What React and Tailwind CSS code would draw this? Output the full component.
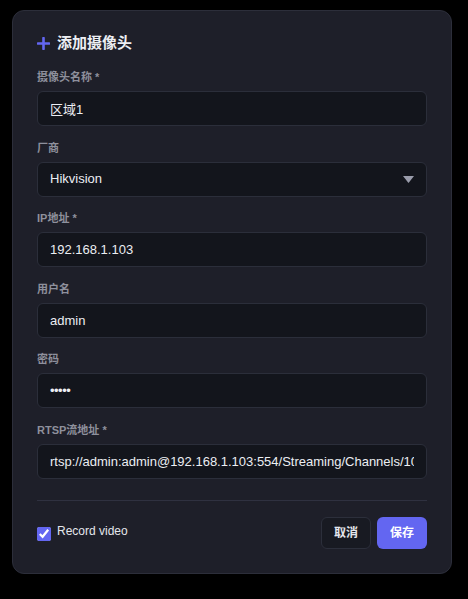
import { useState } from 'react';

const font = { fontFamily: '"Liberation Sans", "Noto Sans CJK SC", sans-serif' };

function Field({ label, children }) {
  return (
    <div>
      <label className="block text-[11px] leading-[15px] font-semibold text-[#8e909c] mb-[6px]">{label}</label>
      {children}
    </div>
  );
}

const inputCls =
  "w-full h-[35px] rounded-[6px] border border-[#2b2e3a] bg-[#13151c] px-[12px] text-[13px] text-[#eceef3] outline-none";

export default function App() {
  const [record, setRecord] = useState(true);

  return (
    <div className="min-h-screen bg-black pt-[10px] pl-[12px]" style={font}>
      <div className="w-[440px] rounded-[12px] border border-[#2c2e3a] bg-[#1e1f29] px-[24px] pt-[22px] pb-[24px]">
        {/* Title */}
        <div className="flex items-center gap-[7px] h-[20px] mb-[17px]">
          <svg width="13" height="13" viewBox="0 0 13 13">
            <path d="M6.5 1v11M1 6.5h11" stroke="#6366f1" strokeWidth="2.6" strokeLinecap="round" />
          </svg>
          <h2 className="text-[15px] font-bold text-[#eceef3]">添加摄像头</h2>
        </div>

        <div className="flex flex-col gap-[14.5px]">
          <Field label="摄像头名称 *">
            <input className={inputCls} defaultValue="区域1" />
          </Field>

          <Field label="厂商">
            <div className="relative">
              <div className={inputCls + " flex items-center"}>Hikvision</div>
              <svg className="absolute right-[13px] top-[14px]" width="11" height="7" viewBox="0 0 11 7">
                <path d="M0 0h11L5.5 7z" fill="#9a9cab" />
              </svg>
            </div>
          </Field>

          <Field label="IP地址 *">
            <input className={inputCls} defaultValue="192.168.1.103" />
          </Field>

          <Field label="用户名">
            <input className={inputCls} defaultValue="admin" />
          </Field>

          <Field label="密码">
            <input className={inputCls + " text-[10px] tracking-[-0.5px]"} defaultValue="•••••" />
          </Field>

          <Field label="RTSP流地址 *">
            <input
              className={inputCls}
              defaultValue="rtsp://admin:admin@192.168.1.103:554/Streaming/Channels/101"
            />
          </Field>
        </div>

        <div className="mt-[21px] border-t border-[#2f3140]" />

        <div className="mt-[16px] flex items-center justify-between">
          <label className="flex items-center gap-[6px] text-[12px] text-[#e4e6ec]">
            <input
              type="checkbox"
              checked={record}
              onChange={(e) => setRecord(e.target.checked)}
              className="w-[14px] h-[14px] accent-[#6366f1] mt-[3px]"
            />
            <span className="-mt-[4px]">Record video</span>
          </label>
          <div className="flex gap-[6px]">
            <button className="w-[50px] h-[32px] rounded-[6px] border border-[#2c2f3b] bg-[#181a22] text-[12px] font-bold text-[#e4e6ec]">
              取消
            </button>
            <button className="w-[50px] h-[32px] rounded-[6px] bg-[#6366f1] text-[12px] font-bold text-white">
              保存
            </button>
          </div>
        </div>
      </div>
    </div>
  );
}
